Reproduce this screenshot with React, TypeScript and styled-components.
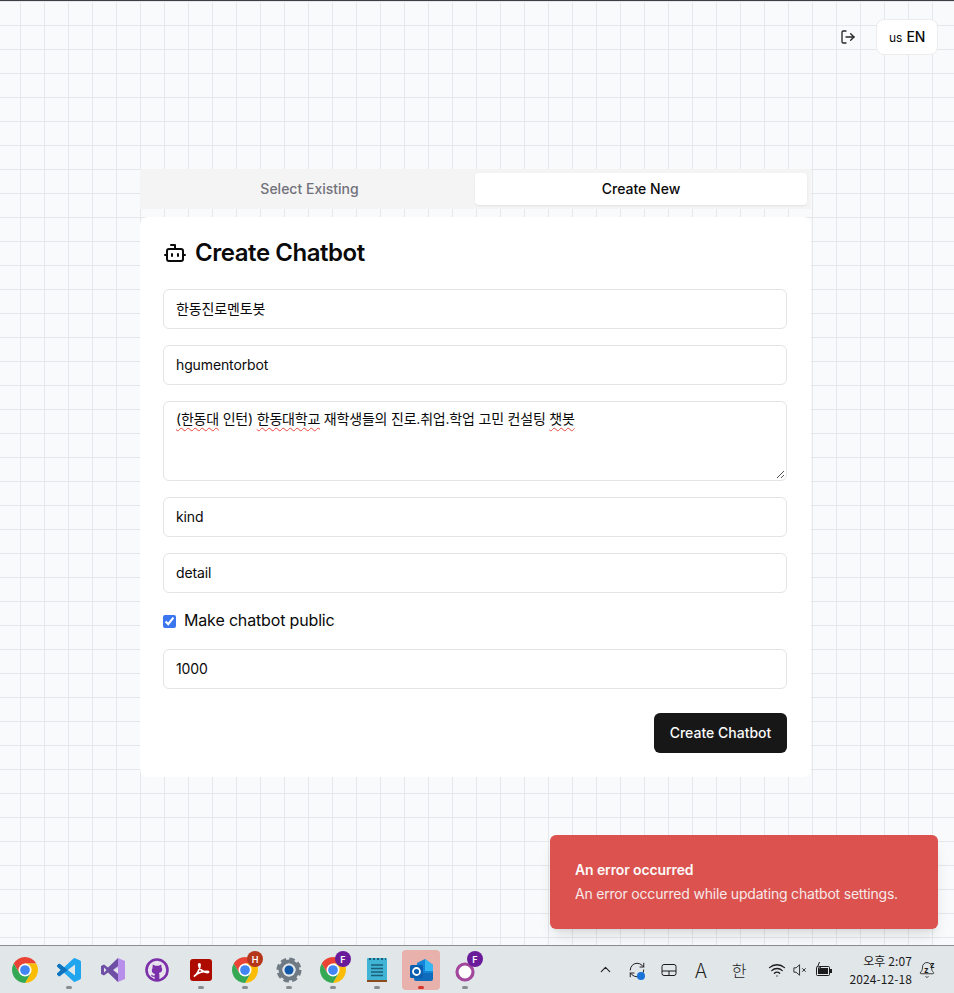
import React from 'react';
import styled, { createGlobalStyle } from 'styled-components';
import { Bot, LogOut, ChevronUp, RefreshCw, Wifi, Bell } from 'lucide-react';

const Global = createGlobalStyle`
  html, body { margin: 0; padding: 0; }
  body { font-family: Inter, "Noto Sans CJK KR", sans-serif; color: #0a0a0a; }
  * { box-sizing: border-box; }
`;

const Screen = styled.div`
  position: relative;
  width: 954px;
  height: 993px;
  overflow: hidden;
  display: flex;
  flex-direction: column;
  border-top: 1px solid #3c3f43;
`;
const Page = styled.main`
  flex: 1;
  min-height: 0;
  padding-top: 18px;
  background-color: #f9fafb;
  background-image: linear-gradient(to right, #e5e7eb 1px, transparent 1px),
    linear-gradient(to bottom, #e5e7eb 1px, transparent 1px);
  background-size: 24px 24px;
  background-position: 20px 0, 0 0;
`;
const TopBar = styled.header`
  display: flex;
  justify-content: flex-end;
  align-items: center;
  gap: 18px;
  height: 36px;
  padding-right: 16px;
  margin-bottom: 114px;
`;
const LogoutButton = styled.button`
  display: flex;
  align-items: center;
  justify-content: center;
  width: 20px;
  height: 20px;
  padding: 0;
  background: transparent;
  border: 0;
  color: #27272a;
`;
const LangButton = styled.button`
  display: flex;
  align-items: baseline;
  justify-content: center;
  gap: 4px;
  width: 62px;
  height: 36px;
  padding: 8px 0 0;
  background: #fff;
  border: 1px solid #ececee;
  border-radius: 8px;
  font: 500 14px Inter, sans-serif;
  letter-spacing: -0.2px;
  color: #0a0a0a;
`;
const Flag = styled.span`
  font-size: 12px;
  font-weight: 400;
  letter-spacing: 0;
`;
const Column = styled.div`
  width: 671px;
  margin-left: 140px;
  display: flex;
  flex-direction: column;
  gap: 8px;
`;
const Tabs = styled.div`
  display: grid;
  grid-template-columns: 331px 332px;
  height: 40px;
  padding: 4px;
  background: #f4f4f5;
`;
const Tab = styled.div<{ $active?: boolean }>`
  display: flex;
  align-items: center;
  justify-content: center;
  padding-bottom: 2px;
  border-radius: 4px;
  font-size: 14px;
  font-weight: 500;
  color: ${p => (p.$active ? '#0a0a0a' : '#71717a')};
  background: ${p => (p.$active ? '#fff' : 'transparent')};
  box-shadow: ${p => (p.$active ? '0 1px 2px rgba(0,0,0,.08)' : 'none')};
`;
const Card = styled.section`
  background: #fff;
  border-radius: 8px;
  padding: 24px 24px 24px 23px;
`;
const Title = styled.h1`
  display: flex;
  align-items: center;
  gap: 8px;
  height: 24px;
  margin: 0 0 24px;
  font-size: 24px;
  line-height: 26px;
  font-weight: 600;
  letter-spacing: -0.45px;
  color: #0a0a0a;
`;
const Form = styled.form`
  display: flex;
  flex-direction: column;
  gap: 16px;
`;
const Input = styled.input`
  display: block;
  width: 100%;
  height: 40px;
  padding: 0 12px 2px;
  background: #fff;
  border: 1px solid #e4e4e7;
  border-radius: 6px;
  font: 400 14px Inter, "Noto Sans CJK KR", sans-serif;
  letter-spacing: -0.12px;
  color: #0a0a0a;
  outline: none;
`;
const AreaBox = styled.div`
  position: relative;
  height: 80px;
  padding: 7px 12px;
  border: 1px solid #e4e4e7;
  border-radius: 6px;
  font-size: 14px;
  line-height: 20px;
  letter-spacing: -0.2px;
  color: #0a0a0a;
`;
const Misspelled = styled.span`
  text-decoration: underline wavy #e5483f 1px;
  text-underline-offset: 3px;
`;
const Grip = styled.svg`
  position: absolute;
  right: 1px;
  bottom: 1px;
  width: 10px;
  height: 10px;
`;
const CheckRow = styled.label`
  display: flex;
  align-items: center;
  gap: 8px;
  height: 24px;
  font-size: 16px;
  letter-spacing: -0.16px;
  color: #0a0a0a;
`;
const CheckText = styled.span`
  padding-bottom: 2px;
`;
const Check = styled.input`
  margin: 0;
  width: 13px;
  height: 13px;
  accent-color: #3b76f0;
`;
const Actions = styled.div`
  display: flex;
  justify-content: flex-end;
  margin-top: 8px;
`;
const Submit = styled.button`
  width: 133px;
  height: 40px;
  padding: 0 0 2px;
  border: 0;
  border-radius: 6px;
  background: #171717;
  color: #fafafa;
  font: 500 14px Inter, sans-serif;
`;
const Toast = styled.div`
  position: absolute;
  left: 550px;
  top: 834px;
  width: 388px;
  height: 94px;
  padding: 25px 25px;
  border-radius: 6px;
  background: #dc524f;
  color: #fafafa;
  box-shadow: 0 10px 15px -3px rgba(0,0,0,.1), 0 4px 6px -4px rgba(0,0,0,.1);
`;
const ToastTitle = styled.div`
  font-size: 14px;
  line-height: 20px;
  font-weight: 600;
  letter-spacing: -0.12px;
  margin-bottom: 4px;
`;
const ToastBody = styled.div`
  font-size: 14px;
  line-height: 20px;
  letter-spacing: -0.2px;
  opacity: .9;
  white-space: nowrap;
`;
const Taskbar = styled.footer`
  flex: none;
  height: 48px;
  display: flex;
  align-items: stretch;
  justify-content: space-between;
  padding-left: 3px;
  background: #e1e6e9;
  border-top: 1px solid #8b8d8f;
`;
const Apps = styled.div`
  display: flex;
`;
const AppSlot = styled.div<{ $active?: boolean }>`
  position: relative;
  width: 44px;
  display: flex;
  align-items: center;
  justify-content: center;
  &::before {
    content: '';
    position: absolute;
    left: 3px;
    right: 3px;
    top: 4px;
    bottom: 3px;
    border-radius: 4px;
    background: ${p => (p.$active ? '#e9b1ab' : 'transparent')};
  }
  & > svg { position: relative; }
`;
const Pip = styled.span<{ $active?: boolean }>`
  position: absolute;
  left: 19px;
  bottom: 4px;
  width: 6px;
  height: 3px;
  border-radius: 2px;
  background: ${p => (p.$active ? '#d6332a' : '#8a8d90')};
`;
const Badge = styled.span<{ $color: string }>`
  position: absolute;
  right: 4px;
  top: 5px;
  width: 16px;
  height: 16px;
  border-radius: 50%;
  display: flex;
  align-items: center;
  justify-content: center;
  background: ${p => p.$color};
  color: #fff;
  font: 600 9px Inter, sans-serif;
`;
const Tray = styled.div`
  display: flex;
  align-items: center;
  padding-right: 18px;
  color: #1c1c1c;
`;
const TraySlot = styled.div<{ $w: number }>`
  position: relative;
  width: ${p => p.$w}px;
  display: flex;
  align-items: center;
  justify-content: center;
`;
const TrayGlyph = styled.span<{ $size: number }>`
  font: 300 ${p => p.$size}px "Noto Sans CJK KR", "Noto Sans", sans-serif;
  line-height: 24px;
  color: #1c1c1c;
`;
const Dot = styled.span`
  position: absolute;
  left: 16px;
  top: 11px;
  width: 8px;
  height: 8px;
  border-radius: 50%;
  background: #1a73d8;
`;
const Clock = styled.div`
  width: 77px;
  padding-right: 6px;
  text-align: right;
  font: 400 12px/18px "Noto Sans CJK KR", "Noto Sans", sans-serif;
  letter-spacing: 0.1px;
  color: #1c1c1c;
`;
const Zz = styled.span<{ $x: number; $y: number }>`
  position: absolute;
  left: ${p => p.$x}px;
  top: ${p => p.$y}px;
  font: 700 8px/8px Inter, sans-serif;
`;

const Chrome = () => (
  <svg width="26" height="26" viewBox="4 4 40 40">
    <path fill="#ea4335" d="M6.68 14A20 20 0 0 1 41.32 14H24L15.34 29Z" />
    <path fill="#fbbc04" d="M41.32 14A20 20 0 0 1 24 44L32.66 29 24 14Z" />
    <path fill="#34a853" d="M24 44A20 20 0 0 1 6.68 14L15.34 29H32.66Z" />
    <circle cx="24" cy="24" r="10" fill="#fff" />
    <circle cx="24" cy="24" r="7.5" fill="#4285f4" />
  </svg>
);
const VSCode = () => (
  <svg width="24" height="24" viewBox="0 0 24 24">
    <path fill="#22a5ef" d="M23.15 2.587L18.21.21a1.494 1.494 0 0 0-1.705.29l-9.46 8.63-4.12-3.128a.999.999 0 0 0-1.276.057L.327 7.261A1 1 0 0 0 .326 8.74L3.899 12 .326 15.26a1 1 0 0 0 .001 1.479L1.65 17.94a.999.999 0 0 0 1.276.057l4.12-3.128 9.46 8.63a1.492 1.492 0 0 0 1.704.29l4.942-2.377A1.5 1.5 0 0 0 24 20.06V3.939a1.5 1.5 0 0 0-.85-1.352zm-5.146 14.861L10.826 12l7.178-5.448v10.896z" />
    <path fill="#0f74bd" d="M.327 7.261A1 1 0 0 0 .326 8.74L3.899 12 .326 15.26a1 1 0 0 0 .001 1.479L1.65 17.94a.999.999 0 0 0 1.276.057l4.12-3.128L10.826 12 7.046 9.13l-4.12-3.128a.999.999 0 0 0-1.276.057z" />
  </svg>
);
const VisualStudio = () => (
  <svg width="24" height="24" viewBox="0 0 24 24">
    <path fill="#b78fea" fillRule="evenodd" d="M17 0l7 3v18l-7 3-9-9.500 9-5.500zM17 8l-5 4 5 4z" />
    <path fill="#6f4fa6" fillRule="evenodd" d="M17 0L7 9.500 3 6.500 0 8v8l3 1.500 4-3L17 24v-8l-5-4 5-4zM3 9.500L5.500 12 3 14.500z" />
  </svg>
);
const GitHubMark = () => (
  <svg width="24" height="24" viewBox="0 0 24 24">
    <circle cx="12" cy="12" r="10.500" fill="#e8e2ee" stroke="#7b2fa8" strokeWidth="2.600" />
    <path fill="#7b2fa8" d="M7.800 6.500l2.400 1.300h3.600l2.400-1.300.4 3c.8 1 .8 3.200-.2 4.300-.7.800-1.700 1.100-2.600 1.200.4.400.6 1 .6 1.600V22h-4.800v-3.200c-1.700.4-3-.1-3.700-1.700l1.200-.3c.5.800 1.300 1 2.500.7 0-.6.200-1.100.6-1.500-.9-.1-1.900-.4-2.600-1.200-1-1.100-1-3.300-.2-4.300z" />
  </svg>
);
const Acrobat = () => (
  <svg width="22" height="22" viewBox="0 0 22 22">
    <rect width="22" height="22" rx="3" fill="#ad0b00" />
    <path fill="none" stroke="#fff" strokeWidth="1.800" d="M4 17.500C7 16 10 10 10 6c0-1.500-1.500-1.500-1.300.3C9 10 13 13.500 17.500 13.500c1.500 0 1.500-1.200-.3-1.200C13 12.300 7 14 4 17.500Z" />
  </svg>
);
const Gear = () => (
  <svg width="26" height="26" viewBox="0 0 26 26">
    <circle cx="13" cy="13" r="8.500" fill="none" stroke="#6f7a84" strokeWidth="4" />
    <circle cx="13" cy="13" r="10.500" fill="none" stroke="#6f7a84" strokeWidth="4" strokeDasharray="5.200 3.050" />
    <circle cx="13" cy="13" r="6.500" fill="#e1e6e9" />
    <circle cx="13" cy="13" r="4.500" fill="#1259a8" />
  </svg>
);
const Notepad = () => (
  <svg width="22" height="26" viewBox="0 0 22 26">
    <rect x="1" y="1" width="20" height="23" rx="1" fill="#3fb4d4" />
    <rect x="1" y="23" width="20" height="2" fill="#8a4b1d" />
    <path stroke="#1d5e78" strokeWidth="2" strokeDasharray="2 2" d="M3 2h17" />
    <path stroke="#1d5e78" strokeWidth="1.500" d="M5 8h12M5 11.500h12M5 15h12M5 18.500h12" />
  </svg>
);
const Outlook = () => (
  <svg width="26" height="26" viewBox="0 0 26 26">
    <path fill="#1384d8" d="M9 6l8-4 8 6v11H9z" />
    <path fill="#35b8f1" d="M17 2l8 6v6h-8z" />
    <path fill="#0f6cbd" d="M6 16h19v6a2 2 0 0 1-2 2H8a2 2 0 0 1-2-2z" />
    <rect x="2" y="8" width="13" height="13" rx="1.500" fill="#0a5fb0" />
    <circle cx="8.500" cy="14.500" r="3.500" fill="none" stroke="#fff" strokeWidth="1.800" />
  </svg>
);
const PurpleRing = () => (
  <svg width="24" height="24" viewBox="0 0 24 24">
    <circle cx="12" cy="14" r="8" fill="#fff" stroke="#a2489c" strokeWidth="3.200" />
  </svg>
);
const Touchpad = () => (
  <svg width="16" height="14" viewBox="0 0 16 14" fill="none" stroke="#1c1c1c" strokeWidth="1">
    <rect x="1" y="1.500" width="14" height="11" rx="2" />
    <path d="M1 8h14M8 8v4.500" />
  </svg>
);
const Speaker = () => (
  <svg width="16" height="14" viewBox="0 0 16 14" fill="none" stroke="#1c1c1c" strokeWidth="1">
    <path d="M1 4.500h2.500L7.500 1v12L3.500 9.500H1z" />
    <path d="M10.500 5l4 4M14.500 5l-4 4" />
  </svg>
);
const Battery = () => (
  <svg width="18" height="16" viewBox="0 0 18 16">
    <rect x="1.500" y="4.500" width="13" height="9" rx="1" fill="none" stroke="#1c1c1c" />
    <rect x="3" y="6" width="10" height="6" fill="#1c1c1c" />
    <rect x="15" y="7" width="2" height="4" fill="#1c1c1c" />
    <path d="M4.500 0L2.500 5h3L4 9" fill="#e1e6e9" stroke="#1c1c1c" strokeWidth="1" />
  </svg>
);

export default function App() {
  return (
    <Screen>
      <Global />
      <Page>
        <TopBar>
          <LogoutButton aria-label="Log out"><LogOut size={16} strokeWidth={2} /></LogoutButton>
          <LangButton><Flag>us</Flag>EN</LangButton>
        </TopBar>
        <Column>
          <Tabs>
            <Tab>Select Existing</Tab>
            <Tab $active>Create New</Tab>
          </Tabs>
          <Card>
            <Title><Bot size={24} strokeWidth={2} />Create Chatbot</Title>
            <Form>
              <Input readOnly value="한동진로멘토봇" />
              <Input readOnly value="hgumentorbot" />
              <AreaBox>
                <Misspelled>(한동대</Misspelled> 인턴) <Misspelled>한동대학교</Misspelled> 재학생들의 진로.취업.학업 고민 컨설팅 <Misspelled>챗봇</Misspelled>
                <Grip viewBox="0 0 10 10"><path d="M9 2L2 9M9 6L6 9" stroke="#555" strokeWidth="1" /></Grip>
              </AreaBox>
              <Input readOnly value="kind" />
              <Input readOnly value="detail" />
              <CheckRow><Check type="checkbox" readOnly checked /><CheckText>Make chatbot public</CheckText></CheckRow>
              <Input readOnly value="1000" />
              <Actions><Submit type="button">Create Chatbot</Submit></Actions>
            </Form>
          </Card>
        </Column>
      </Page>
      <Toast>
        <ToastTitle>An error occurred</ToastTitle>
        <ToastBody>An error occurred while updating chatbot settings.</ToastBody>
      </Toast>
      <Taskbar>
        <Apps>
          <AppSlot><Chrome /></AppSlot>
          <AppSlot><VSCode /><Pip /></AppSlot>
          <AppSlot><VisualStudio /></AppSlot>
          <AppSlot><GitHubMark /></AppSlot>
          <AppSlot><Acrobat /><Pip /></AppSlot>
          <AppSlot><Chrome /><Badge $color="#b5361a">H</Badge><Pip /></AppSlot>
          <AppSlot><Gear /><Pip /></AppSlot>
          <AppSlot><Chrome /><Badge $color="#6a1b9a">F</Badge><Pip /></AppSlot>
          <AppSlot><Notepad /><Pip /></AppSlot>
          <AppSlot $active><Outlook /><Pip $active /></AppSlot>
          <AppSlot><PurpleRing /><Badge $color="#6a1b9a">F</Badge><Pip /></AppSlot>
        </Apps>
        <Tray>
          <TraySlot $w={32}><ChevronUp size={17} strokeWidth={1.5} /></TraySlot>
          <TraySlot $w={32}><RefreshCw size={18} strokeWidth={1.3} /><Dot /></TraySlot>
          <TraySlot $w={32}><Touchpad /></TraySlot>
          <TraySlot $w={32}><TrayGlyph $size={20}>A</TrayGlyph></TraySlot>
          <TraySlot $w={44}><TrayGlyph $size={16}>한</TrayGlyph></TraySlot>
          <TraySlot $w={32}><Wifi size={18} strokeWidth={1.7} /></TraySlot>
          <TraySlot $w={14}><Speaker /></TraySlot>
          <TraySlot $w={34}><Battery /></TraySlot>
          <Clock>오후 2:07<br />2024-12-18</Clock>
          <TraySlot $w={18}><Bell size={18} strokeWidth={1.1} /><Zz $x={6} $y={5}>z</Zz><Zz $x={12} $y={0}>z</Zz></TraySlot>
        </Tray>
      </Taskbar>
    </Screen>
  );
}
